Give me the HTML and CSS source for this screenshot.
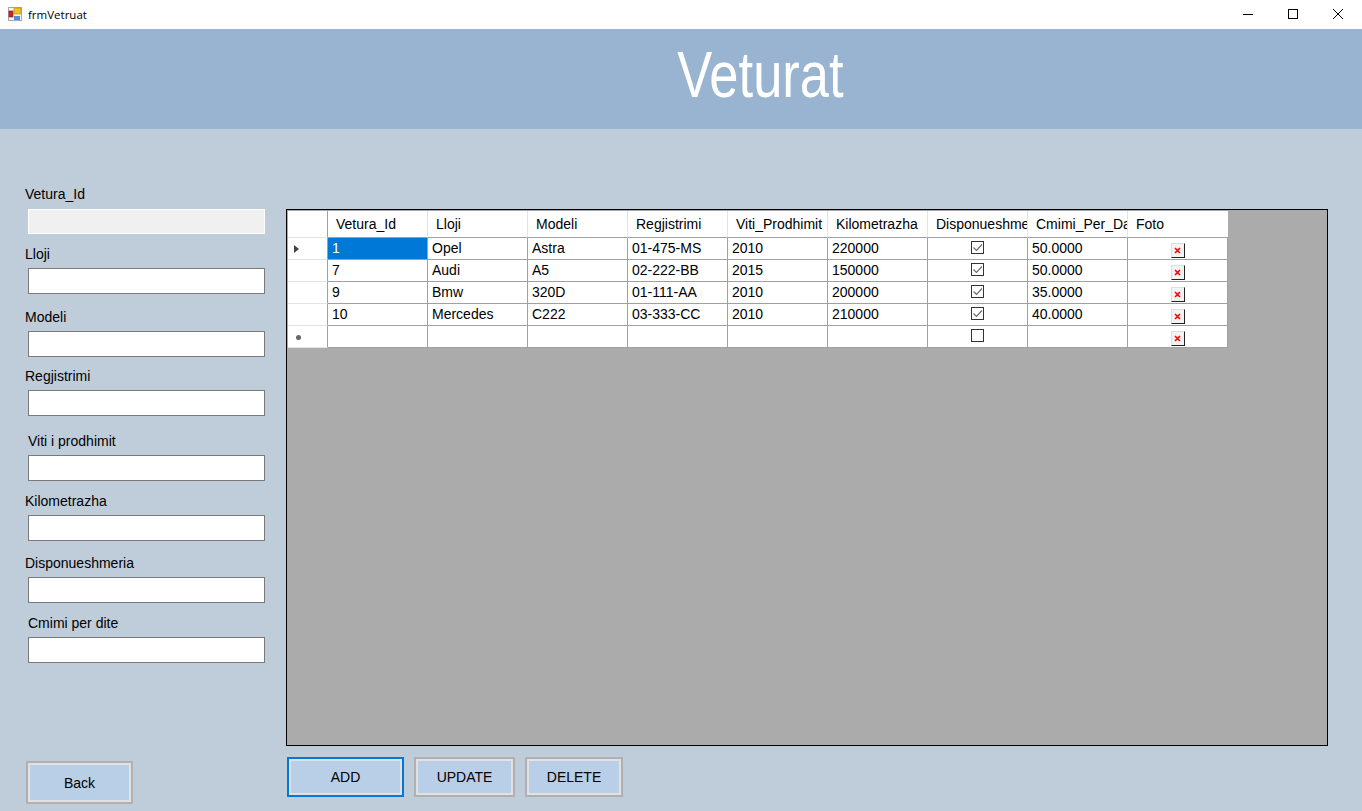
FILE: index.html
```html
<!DOCTYPE html>
<html lang="sq">
<head>
<meta charset="utf-8">
<title>frmVetruat</title>
<link rel="stylesheet" href="styles.css">
</head>
<body>
<div class="window">
  <div class="titlebar">
    <svg class="app-icon" width="14" height="14" viewBox="0 0 14 14">
      <rect x="0.5" y="0.5" width="13" height="13" fill="#f4f4f4" stroke="#a8a8a8"/>
      <rect x="6" y="1" width="7" height="6" fill="#f5c21c" stroke="#b98a10" stroke-width="0.6"/>
      <rect x="1" y="4" width="4" height="6" fill="#c8281e" stroke="#7e1a14" stroke-width="0.6"/>
      <rect x="6" y="9" width="6" height="4" fill="#4f8fe0"/>
    </svg>
    <span class="title-text">frmVetruat</span>
    <div class="win-controls">
      <svg width="12" height="12" viewBox="0 0 12 12"><path d="M1 6.5H11" stroke="#000" fill="none"/></svg>
      <svg width="12" height="12" viewBox="0 0 12 12"><rect x="1.5" y="1.5" width="9" height="9" stroke="#000" fill="none"/></svg>
      <svg width="12" height="12" viewBox="0 0 12 12"><path d="M1 1L11 11M11 1L1 11" stroke="#000" fill="none"/></svg>
    </div>
  </div>
  <header class="banner"><h1 class="banner-title">Veturat</h1></header>
  <div class="content">
    <aside class="sidebar">
      <div class="form">
        <label class="lbl l1">Vetura_Id</label><input class="field disabled" disabled>
        <label class="lbl l2">Lloji</label><input class="field">
        <label class="lbl l3">Modeli</label><input class="field">
        <label class="lbl l4">Regjistrimi</label><input class="field">
        <label class="lbl l5 indent">Viti i prodhimit</label><input class="field">
        <label class="lbl l6">Kilometrazha</label><input class="field">
        <label class="lbl l7">Disponueshmeria</label><input class="field">
        <label class="lbl l8 indent">Cmimi per dite</label><input class="field">
      </div>
      <button class="btn back">Back</button>
    </aside>
    <main class="main">
      <div class="grid-view">
        <table class="grid">
          <thead>
            <tr>
              <th class="rowhead"></th><th>Vetura_Id</th><th>Lloji</th><th>Modeli</th><th>Regjistrimi</th><th>Viti_Prodhimit</th><th>Kilometrazha</th><th>Disponueshme</th><th>Cmimi_Per_Day</th><th>Foto</th>
            </tr>
          </thead>
          <tbody>
            <tr>
              <td class="rowhead"><span class="arrow"></span></td><td class="selected">1</td><td>Opel</td><td>Astra</td><td>01-475-MS</td><td>2010</td><td>220000</td><td class="c"><span class="check"><svg viewBox="0 0 11 11" width="11" height="11"><path d="M1.5 5.5L4.5 8.5L10 2.5" stroke="#6d6d6d" stroke-width="1.2" fill="none"/></svg></span></td><td>50.0000</td><td class="c"><span class="noimg"><svg viewBox="0 0 7 7" width="7" height="7"><path d="M1 1L6 6M6 1L1 6" stroke="#f00" stroke-width="1.6"/></svg></span></td>
            </tr>
            <tr>
              <td class="rowhead"></td><td>7</td><td>Audi</td><td>A5</td><td>02-222-BB</td><td>2015</td><td>150000</td><td class="c"><span class="check"><svg viewBox="0 0 11 11" width="11" height="11"><path d="M1.5 5.5L4.5 8.5L10 2.5" stroke="#6d6d6d" stroke-width="1.2" fill="none"/></svg></span></td><td>50.0000</td><td class="c"><span class="noimg"><svg viewBox="0 0 7 7" width="7" height="7"><path d="M1 1L6 6M6 1L1 6" stroke="#f00" stroke-width="1.6"/></svg></span></td>
            </tr>
            <tr>
              <td class="rowhead"></td><td>9</td><td>Bmw</td><td>320D</td><td>01-111-AA</td><td>2010</td><td>200000</td><td class="c"><span class="check"><svg viewBox="0 0 11 11" width="11" height="11"><path d="M1.5 5.5L4.5 8.5L10 2.5" stroke="#6d6d6d" stroke-width="1.2" fill="none"/></svg></span></td><td>35.0000</td><td class="c"><span class="noimg"><svg viewBox="0 0 7 7" width="7" height="7"><path d="M1 1L6 6M6 1L1 6" stroke="#f00" stroke-width="1.6"/></svg></span></td>
            </tr>
            <tr>
              <td class="rowhead"></td><td>10</td><td>Mercedes</td><td>C222</td><td>03-333-CC</td><td>2010</td><td>210000</td><td class="c"><span class="check"><svg viewBox="0 0 11 11" width="11" height="11"><path d="M1.5 5.5L4.5 8.5L10 2.5" stroke="#6d6d6d" stroke-width="1.2" fill="none"/></svg></span></td><td>40.0000</td><td class="c"><span class="noimg"><svg viewBox="0 0 7 7" width="7" height="7"><path d="M1 1L6 6M6 1L1 6" stroke="#f00" stroke-width="1.6"/></svg></span></td>
            </tr>
            <tr>
              <td class="rowhead"><span class="star"></span></td><td></td><td></td><td></td><td></td><td></td><td></td><td class="c"><span class="check"></span></td><td></td><td class="c"><span class="noimg"><svg viewBox="0 0 7 7" width="7" height="7"><path d="M1 1L6 6M6 1L1 6" stroke="#f00" stroke-width="1.6"/></svg></span></td>
            </tr>
          </tbody>
        </table>
      </div>
      <div class="actions">
        <button class="btn add">ADD</button>
        <button class="btn update">UPDATE</button>
        <button class="btn delete">DELETE</button>
      </div>
    </main>
  </div>
</div>
</body>
</html>
```
FILE: styles.css
```css
* { box-sizing: border-box; }
html, body { margin: 0; height: 100%; }
body { font-family: "Liberation Sans", Arial, sans-serif; font-size: 14px; color: #000; overflow: hidden; }
.window { width: 1362px; height: 811px; display: flex; flex-direction: column; background: #bfcddb; }

.titlebar { height: 29px; flex: none; background: #fff; display: flex; align-items: center; padding-left: 8px; padding-bottom: 1px; }
.app-icon { flex: none; margin-right: 6px; }
.title-text { font-family: "Open Sans", "Noto Sans", sans-serif; font-size: 11.5px; }
.win-controls { margin-left: auto; display: flex; gap: 33px; padding-right: 18px; }
.win-controls svg { display: block; }

.banner { height: 100px; flex: none; background: #99b4d1; display: flex; justify-content: center; }
.banner-title { margin: 0 0 0 158px; font-weight: 400; font-size: 64px; line-height: 92px; color: #fff; transform: scaleX(0.82); }

.content { flex: 1; display: flex; min-height: 0; }
.sidebar { width: 286px; flex: none; display: flex; flex-direction: column; position: relative; }
.form { display: flex; flex-direction: column; padding: 57px 0 0 25px; }
.lbl { display: block; height: 16px; line-height: 16px; }
.indent { padding-left: 3px; }
.field { display: block; width: 237px; height: 26px; margin: 0 0 0 3px; padding: 0 3px; background: #fff; border: 1px solid #7a7a7a; }
.field.disabled { background: #f0f0f0; border-color: #fff; height: 25px; }
.l1 { margin-bottom: 7px; }
.l2 { margin-top: 12px; margin-bottom: 6px; }
.l3 { margin-top: 15px; margin-bottom: 6px; }
.l4 { margin-top: 11px; margin-bottom: 6px; }
.l5 { margin-top: 17px; margin-bottom: 6px; }
.l6 { margin-top: 12px; margin-bottom: 6px; }
.l7 { margin-top: 14px; margin-bottom: 6px; }
.l8 { margin-top: 12px; margin-bottom: 6px; }

.btn { font: inherit; color: #000; background: #b9cfe8; border: 2px solid #b0b0b0; box-shadow: inset 0 0 0 2px #e1e1e1; padding: 0; }
.back { width: 107px; height: 43px; margin: auto 0 7px 26px; }

.main { flex: 1; display: flex; flex-direction: column; padding-top: 80px; }
.grid-view { width: 1042px; height: 537px; flex: none; background: #ababab; border: 1px solid #000; padding: 1px; }
.grid { border-collapse: separate; border-spacing: 0; table-layout: fixed; width: 940px; font-size: 14px; background: #fff; }
.grid th, .grid td { width: 100px; padding: 0; overflow: hidden; white-space: nowrap; border-right: 1px solid #a0a0a0; border-bottom: 1px solid #a0a0a0; }
.grid th { height: 27px; font-weight: 400; text-align: left; padding-left: 8px; border-right-color: #e3e3e3; }
.grid td { height: 22px; padding-left: 4px; line-height: 21px; }
.grid th:last-child { border-right: 0; }
.grid .rowhead { width: 40px; padding: 0; border-right-color: #a0a0a0; border-bottom-color: #e3e3e3; position: relative; }
.grid td.selected { background: #0078d7; color: #fff; }
.grid td.c { padding: 0; text-align: center; }
.arrow { display: block; width: 0; height: 0; margin-left: 6px; border-left: 5px solid #444; border-top: 4px solid transparent; border-bottom: 4px solid transparent; }
.star { display: block; width: 5px; height: 5px; margin: 2px 0 0 8px; border-radius: 50%; background: #666; }
.check { display: inline-block; width: 13px; height: 13px; border: 1px solid #333; vertical-align: -1px; background: #fff; }
.check svg { display: block; }
.noimg { display: inline-flex; align-items: center; justify-content: center; width: 14px; height: 15px; vertical-align: -1px; background: #f3f3f3; border: 1px solid; border-color: #ddd #222 #222 #ddd; }

.actions { display: flex; margin-top: 11px; padding-left: 1px; gap: 10px; }
.actions .btn { height: 40px; }
.add { width: 117px; border-color: #0078d7; }
.update { width: 101px; }
.delete { width: 98px; }
```
